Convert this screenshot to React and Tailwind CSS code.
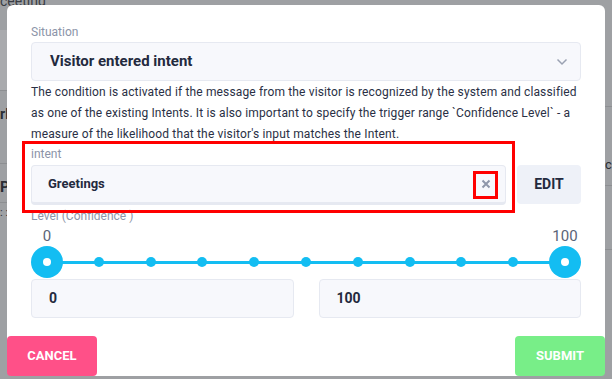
import React from "react";

const font = { fontFamily: "Roboto, 'Noto Sans', sans-serif" };

function Handle() {
  return (
    <div className="w-0 flex justify-center">
      <div className="shrink-0 w-[32px] h-[32px] rounded-full bg-[#13bdf2] flex items-center justify-center">
        <div className="w-[8px] h-[8px] rounded-full bg-white" />
      </div>
    </div>
  );
}

function Dot() {
  return (
    <div className="w-0 flex justify-center">
      <div className="shrink-0 w-[10px] h-[10px] rounded-full bg-[#13bdf2]" />
    </div>
  );
}

function Slider() {
  const dots = Array.from({ length: 9 }, (_, i) => i);
  return (
    <div className="relative h-[34px]">
      <div className="absolute left-[16px] right-[16px] top-[16px] h-[3px] bg-[#13bdf2]" />
      <div className="absolute inset-x-[16px] top-0 h-[34px] flex items-center justify-between">
        <Handle />
        {dots.map((d) => (
          <Dot key={d} />
        ))}
        <Handle />
      </div>
    </div>
  );
}

export default function App() {
  return (
    <div className="relative w-[612px] h-[379px] overflow-hidden bg-[#9ea0a3]" style={font}>
      {/* background fragments */}
      <div className="absolute left-0 top-[-9px] text-[14px] text-[#3a3d44]">ceeting</div>
      <div className="absolute left-0 top-[30px] w-[7px] h-[60px] bg-[#a9aaad]" />
      <div className="absolute left-0 top-[90px] w-[7px] h-[1px] bg-[#8d8f92]" />
      <div className="absolute left-0 top-[104px] text-[14px] font-bold text-[#2a2d33]">rl</div>
      <div className="absolute left-0 top-[163px] w-[7px] h-[1px] bg-[#8d8f92]" />
      <div className="absolute left-0 top-[176px] text-[15px] font-bold text-[#2a2d33]">P</div>
      <div className="absolute left-0 top-[202px] w-[7px] h-[1px] bg-[#8d8f92]" />
      <div className="absolute left-0 top-[205px] text-[11px] text-[#2a2d33]">: :</div>
      <div className="absolute right-0 top-[106px] w-[7px] h-[1px] bg-[#8d8f92]" />
      <div className="absolute right-0 top-[155px] text-[13px] text-[#2a2d33] w-[7px] overflow-hidden">ci</div>
      <div className="absolute right-0 top-[185px] w-[7px] h-[1px] bg-[#8d8f92]" />
      <div className="absolute right-0 top-[249px] w-[7px] h-[1px] bg-[#8d8f92]" />

      {/* modal */}
      <div className="absolute left-[7px] top-[5px] w-[598px] h-[371px] bg-white rounded-[6px] flex flex-col">
        <div className="px-[24px] pt-[20px] flex flex-col">
          <div className="text-[12px] leading-[14px] text-[#8c94a8]">Situation</div>
          <div className="mt-[3px] h-[39px] rounded-[4px] border border-[#e6e9f1] bg-[#f7f8fc] flex items-center justify-between pl-[18px] pr-[12px]">
            <span className="text-[15px] font-bold text-[#232a3e]">Visitor entered intent</span>
            <svg width="12" height="8" viewBox="0 0 12 8" fill="none">
              <path d="M1.5 1.5 L6 6 L10.5 1.5" stroke="#9aa1b2" strokeWidth="1.5" />
            </svg>
          </div>
          <p className="mt-[1px] text-[12px] leading-[21px] text-[#2a3045] tracking-[0.15px]">
            The condition is activated if the message from the visitor is recognized by the system and classified as one of the existing Intents. It is also important to specify the trigger range `Confidence Level` - a measure of the likelihood that the visitor's input matches the Intent.
          </p>
          <div className="mt-[1px] text-[12px] leading-[16px] text-[#8c94a8]">intent</div>
          <div className="mt-[3px] flex gap-[11px]">
            <div className="flex-1 h-[40px] rounded-[4px] border border-[#e6e9f1] border-b-[3px] bg-[#f7f8fc] flex items-center justify-between pl-[16px] pr-[14px]">
              <span className="text-[13px] font-bold text-[#232a3e]">Greetings</span>
              <svg width="10" height="10" viewBox="0 0 10 10">
                <path d="M1.5 1.5 L8.5 8.5 M8.5 1.5 L1.5 8.5" stroke="#8f97aa" strokeWidth="2" />
              </svg>
            </div>
            <div className="w-[64px] h-[39px] rounded-[4px] bg-[#eef1f8] flex items-center justify-center text-[14px] font-bold text-[#232a3e]">
              EDIT
            </div>
          </div>
          <div className="mt-[4px] text-[12px] leading-[14px] text-[#8c94a8]">Level (Confidence )</div>
          <div className="mt-[4px] flex justify-between text-[15px] leading-[18px] text-[#5b6478]">
            <span className="w-[32px] text-center">0</span>
            <span className="w-[32px] text-center">100</span>
          </div>
          <div className="mt-[0px]">
            <Slider />
          </div>
          <div className="mt-[0px] flex gap-[25px]">
            <div className="flex-1 h-[39px] rounded-[4px] border border-[#e6e9f1] bg-[#f7f8fc] flex items-center pl-[17px] text-[14px] font-bold text-[#232a3e]">0</div>
            <div className="flex-1 h-[39px] rounded-[4px] border border-[#e6e9f1] bg-[#f7f8fc] flex items-center pl-[17px] text-[14px] font-bold text-[#232a3e]">100</div>
          </div>
        </div>
        <div className="mt-auto flex justify-between">
          <div className="w-[90px] h-[40px] rounded-[4px] bg-[#ff5088] flex items-center justify-center text-[13px] font-bold text-white">CANCEL</div>
          <div className="w-[90px] h-[40px] rounded-[4px] bg-[#78ee88] flex items-center justify-center text-[13px] font-bold text-white">SUBMIT</div>
        </div>

        {/* red highlight overlays */}
        <div className="absolute left-[15px] top-[136px] w-[493px] h-[72px] border-[3px] border-[#ff0000] pointer-events-none" />
        <div className="absolute left-[466px] top-[166px] w-[25px] h-[28px] border-[3px] border-[#ff0000] pointer-events-none" />
      </div>
    </div>
  );
}
